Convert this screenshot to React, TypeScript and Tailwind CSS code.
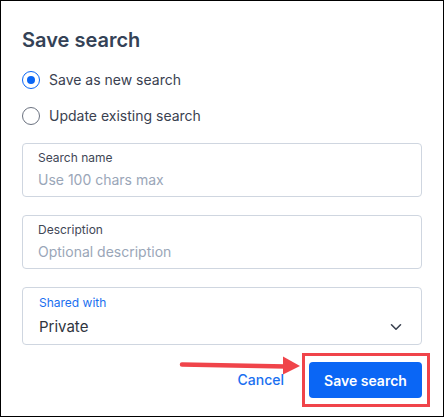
import React, { useState } from 'react';

const Radio = ({ checked, label, onClick }: { checked: boolean; label: string; onClick: () => void }) => (
  <button type="button" onClick={onClick} className="flex h-5 items-center gap-[9px] text-left">
    <span
      className={`flex h-[18px] w-[18px] items-center justify-center rounded-full border-[1.5px] ${
        checked ? 'border-[#0a66f5]' : 'border-[#6b7280]'
      }`}
    >
      {checked && <span className="h-[8px] w-[8px] rounded-full bg-[#0a66f5]" />}
    </span>
    <span className="text-[14px] leading-5 text-[#3a4150]">{label}</span>
  </button>
);

const Field = ({ label, placeholder }: { label: string; placeholder: string }) => (
  <div className="rounded-[4px] border border-[#cfd6e0] px-[15px] py-[6px]">
    <div className="text-[12px] leading-4 text-[#3f4756]">{label}</div>
    <input
      placeholder={placeholder}
      className="mt-1 block h-5 w-full text-[14px] leading-5 text-[#334155] outline-none placeholder:text-[#9aa6b8]"
    />
  </div>
);

export default function App() {
  const [mode, setMode] = useState<'new' | 'update'>('new');

  return (
    <div
      className="relative h-[417px] w-[444px] border border-black bg-white px-[21px] pt-[25px]"
      style={{ fontFamily: 'Inter, "Noto Sans", sans-serif' }}
    >
      <h1 className="text-[20px] font-semibold leading-7 text-[#344256]">Save search</h1>

      {/* mode */}
      <div className="mt-4 flex flex-col gap-4">
        <Radio checked={mode === 'new'} label="Save as new search" onClick={() => setMode('new')} />
        <Radio checked={mode === 'update'} label="Update existing search" onClick={() => setMode('update')} />
      </div>

      <div className="mt-[17px] flex flex-col gap-[18px]">
        <Field label="Search name" placeholder="Use 100 chars max" />
        <Field label="Description" placeholder="Optional description" />

        <div className="rounded-[4px] border border-[#cfd6e0] px-[16px] pt-[7px] pb-[6px]">
          <div className="text-[12px] leading-4 text-[#1a6ff0]">Shared with</div>
          <div className="mt-[5px] flex h-[22px] items-center justify-between">
            <span className="text-[15px] leading-[22px] text-[#2f3540]">Private</span>
            <svg width="12" height="8" viewBox="0 0 12 8" className="mr-[3px]">
              <path d="M1.5 1.8 6 6.2l4.5-4.4" fill="none" stroke="#3a4150" strokeWidth="1.6" strokeLinecap="round" strokeLinejoin="round" />
            </svg>
          </div>
        </div>
      </div>

      {/* footer */}
      <div className="mt-[17px] flex items-center justify-end gap-[25px]">
        <button type="button" className="text-[14px] font-medium leading-5 text-[#1a6ff0]">
          Cancel
        </button>
        <div className="relative">
          <button
            type="button"
            className="h-9 w-[113px] rounded-[4px] bg-[#0a66f5] text-[14px] font-semibold text-white"
          >
            Save search
          </button>
          <div className="pointer-events-none absolute -top-[9px] -bottom-[9px] -left-[7px] -right-[8px] border-[3px] border-[#f0444a]" />
        </div>
      </div>

      {/* annotation arrow */}
      <svg className="pointer-events-none absolute left-[175px] top-[350px]" width="130" height="30" viewBox="0 0 130 30">
        <path d="M6 13.5 L110 15.5" stroke="#f0444a" strokeWidth="4.5" strokeLinecap="round" />
        <path d="M107 5.5 L124 15 L107 23.5 Z" fill="#f0444a" />
      </svg>
    </div>
  );
}
